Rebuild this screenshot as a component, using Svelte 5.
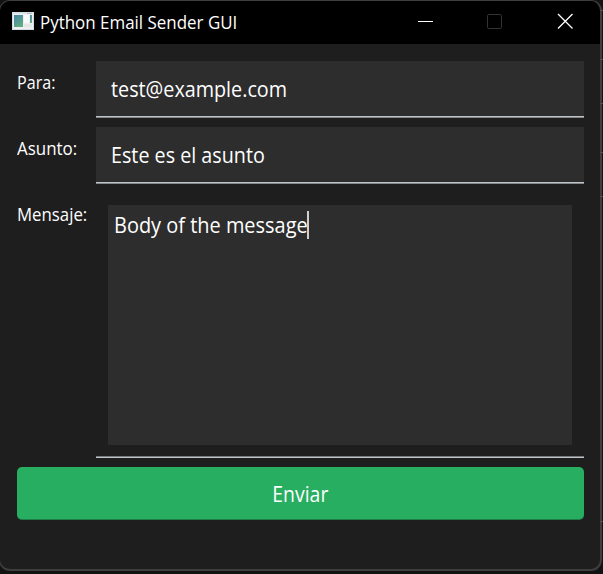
<script>
  let to = $state('test@example.com');
  let subject = $state('Este es el asunto');
  let message = $state('Body of the message');
  const marks = [10, 59, 103, 152, 196, 521];
</script>

<div class="desktop">
  <main class="window">
    <header>
      <svg class="appicon" width="22" height="18" viewBox="0 0 22 18">
        <defs>
          <linearGradient id="teal" x1="0" y1="0" x2="0.7" y2="1">
            <stop offset="0" stop-color="#4583ac" />
            <stop offset="1" stop-color="#62ad80" />
          </linearGradient>
        </defs>
        <rect width="22" height="18" fill="#d3dce2" />
        <rect x="1" y="1" width="20" height="16" fill="#eeeff0" />
        <rect x="1" y="1" width="14" height="1" fill="#dce7ef" />
        <rect x="15" y="1" width="5" height="1" fill="#b4c0ca" />
        <rect x="2" y="3" width="9" height="12" fill="url(#teal)" />
        <rect x="12" y="3" width="5" height="8" fill="#fafafa" />
        <rect x="18" y="3" width="2" height="8" fill="url(#teal)" />
        <rect x="12" y="12" width="8" height="3" fill="#e6e6e6" />
      </svg>
      <h1><span class="fit title">Python Email Sender GUI</span></h1>
      <svg class="controls" width="160" height="20" viewBox="0 0 160 20" fill="none">
        <path d="M1 10.5H16" stroke="#fff" />
        <rect x="70.5" y="3.5" width="14" height="14" rx="1.2" stroke="#333" />
        <path d="M141 3L155.500 17.500M155.500 3L141 17.500" stroke="#fff" stroke-width="1.3" />
      </svg>
    </header>
    <section class="form">
      <div class="row">
        <span class="label"><span class="fit para">Para:</span></span>
        <div class="field"><span class="fit to">{to}</span></div>
      </div>
      <div class="row">
        <span class="label"><span class="fit asunto">Asunto:</span></span>
        <div class="field"><span class="fit subject">{subject}</span></div>
      </div>
      <div class="row big">
        <span class="label"><span class="fit mensaje">Mensaje:</span></span>
        <div class="area">
          <div class="editor"><span class="slot"><span class="fit message">{message}</span></span><i class="caret"></i></div>
        </div>
      </div>
      <button><span class="fit send">Enviar</span></button>
    </section>
  </main>
  {#each marks as y}
    <i class="mark" style="top: {y}px"></i>
  {/each}
</div>

<style>
  :global(body) { margin: 0; background: #111; overflow: hidden; }
  .desktop {
    position: relative;
    width: 603px;
    height: 574px;
    overflow: hidden;
    background: #121212;
    font-family: "Open Sans", "Noto Sans", sans-serif;
    color: #fff;
  }
  .mark { position: absolute; right: 0; width: 3px; height: 1px; background: #505050; }
  .window {
    position: relative;
    box-sizing: border-box;
    width: 603px;
    height: 571px;
    margin-left: -1px;
    border: 2px solid #3e3e3e;
    border-top-width: 1px;
    border-left-width: 1px;
    border-radius: 11px;
    background: #1e1e1e;
    overflow: hidden;
  }
  header {
    display: flex;
    align-items: flex-start;
    height: 43px;
    background: #000;
  }
  .appicon { flex: none; margin: 11px 0 0 12px; }
  h1 {
    flex: 1;
    margin: 8px 0 0 6px;
    font-size: 17.5px;
    font-weight: 400;
    line-height: 26px;
    white-space: nowrap;
  }
  .controls { flex: none; margin: 10px 23px 0 0; }
  .form { padding: 17px 16px 0 17px; }
  .row { display: flex; height: 57px; margin-bottom: 9px; }
  .label {
    flex: none;
    width: 79px;
    padding-top: 8px;
    font-size: 17.5px;
    line-height: 26px;
    white-space: nowrap;
  }
  .field, .area {
    box-sizing: border-box;
    flex: 1;
    border-bottom: 1px solid #85888a;
    box-shadow: inset 0 -1px #bdc3c7;
    background: #2d2d2d;
  }
  .field { padding: 13px 15px 0; font-size: 21px; line-height: 30px; }
  .big { height: 265px; }
  .area {
    padding: 12px 12px 0;
    background: none;
    border-bottom-color: #bdc3c7;
    box-shadow: inset 0 -1px #777a7c;
  }
  .editor {
    display: flex;
    box-sizing: border-box;
    height: 240px;
    padding: 6px 6px 0;
    background: #2d2d2d;
    font-size: 21px;
    line-height: 29px;
  }
  .slot { flex: none; width: 193px; white-space: nowrap; }
  .caret { width: 2px; height: 28px; background: #d0d0d0; }
  button {
    display: block;
    width: 567px;
    height: 53px;
    padding: 1px 0 0;
    border: 0;
    border-bottom: 1px solid #1d7b45;
    border-radius: 5px;
    background: #27ae60;
    color: #fff;
    font: 21px "Open Sans", "Noto Sans", sans-serif;
  }
  /* Horizontal condensing for the narrow interface lettering */
  .fit { display: inline-block; transform-origin: 0 50%; }
  .title { transform: scaleX(0.968); }
  .para { transform: scaleX(0.92); }
  .asunto { transform: scaleX(0.967); }
  .mensaje { transform: scaleX(0.96); }
  .to { transform: scaleX(0.941); }
  .subject { transform: scaleX(0.939); }
  .message { transform: scaleX(0.95); }
  .send { transform: scaleX(0.925); transform-origin: 50% 50%; }
</style>
